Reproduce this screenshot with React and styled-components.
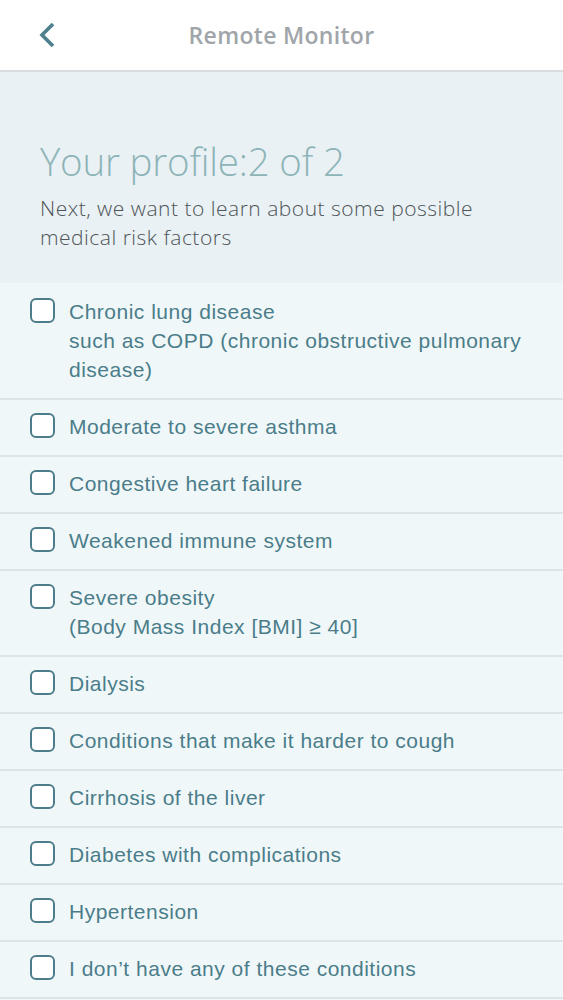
import React from "react";
import styled, { createGlobalStyle } from "styled-components";

const Global = createGlobalStyle`
  html, body { margin: 0; padding: 0; background: #f0f7f9; }
  * { box-sizing: border-box; }
`;

const Page = styled.div`
  width: 563px;
  min-height: 1000px;
  background: #f0f7f9;
  display: flex;
  flex-direction: column;
`;

const Header = styled.header`
  height: 72px;
  background: #ffffff;
  border-bottom: 2px solid #d9dddf;
  display: grid;
  grid-template-columns: 80px 1fr 80px;
  align-items: center;
`;

const Back = styled.button`
  border: none;
  background: transparent;
  padding: 0 0 0 38px;
  height: 100%;
  display: flex;
  align-items: center;
  cursor: pointer;
`;

const Title = styled.h1`
  margin: 0;
  text-align: center;
  font-family: "Open Sans", sans-serif;
  font-weight: 600;
  font-size: 23px;
  color: #a0a5aa;
  letter-spacing: 0.3px;
`;

const Intro = styled.section`
  background: #e9f1f4;
  padding: 66px 40px 31px;
`;

const Heading = styled.h2`
  margin: 0;
  font-family: "Open Sans", sans-serif;
  font-weight: 300;
  font-size: 38.5px;
  line-height: 46px;
  color: #8db4b7;
  letter-spacing: -0.2px;
`;

const Sub = styled.p`
  margin: 10px 0 0;
  font-family: "Open Sans", sans-serif;
  font-weight: 300;
  font-size: 21px;
  line-height: 29px;
  color: #4e5457;
  letter-spacing: 0.5px;
`;

const List = styled.ul`
  list-style: none;
  margin: 0;
  padding: 2px 0 0;
  background: #f0f7f9;
`;

const Row = styled.li`
  display: flex;
  align-items: flex-start;
  gap: 14px;
  padding: 12px 20px 14px 30px;
  border-bottom: 2px solid #dde4e7;
  background: #f0f7f9;
`;

const Box = styled.span`
  flex: none;
  width: 25px;
  height: 25px;
  margin-top: 1px;
  border: 2px solid #4d7d8a;
  border-radius: 6px;
  background: #ffffff;
`;

const Label = styled.div`
  font-family: "Liberation Sans", Arial, sans-serif;
  font-size: 21px;
  line-height: 29px;
  color: #4a7d89;
  letter-spacing: 0.5px;
`;

const items = [
  ["Chronic lung disease", "such as COPD (chronic obstructive pulmonary disease)"],
  ["Moderate to severe asthma"],
  ["Congestive heart failure"],
  ["Weakened immune system"],
  ["Severe obesity", "(Body Mass Index [BMI] \u2265 40]"],
  ["Dialysis"],
  ["Conditions that make it harder to cough"],
  ["Cirrhosis of the liver"],
  ["Diabetes with complications"],
  ["Hypertension"],
  ["I don\u2019t have any of these conditions"],
];

export default function App() {
  return (
    <Page>
      <Global />
      <Header>
        <Back aria-label="Back">
          <svg width="18" height="26" viewBox="0 0 18 26">
            <path d="M15 2 L4 13 L15 24" fill="none" stroke="#4e7f8d" strokeWidth="3.6" strokeLinecap="butt" strokeLinejoin="miter" />
          </svg>
        </Back>
        <Title>Remote Monitor</Title>
        <span />
      </Header>
      <Intro>
        <Heading>Your profile:2 of 2</Heading>
        <Sub>Next, we want to learn about some possible medical risk factors</Sub>
      </Intro>
      <List>
        {items.map((lines, i) => (
          <Row key={i}>
            <Box />
            <Label>
              {lines.map((l, j) => (
                <div key={j}>{l}</div>
              ))}
            </Label>
          </Row>
        ))}
      </List>
    </Page>
  );
}
